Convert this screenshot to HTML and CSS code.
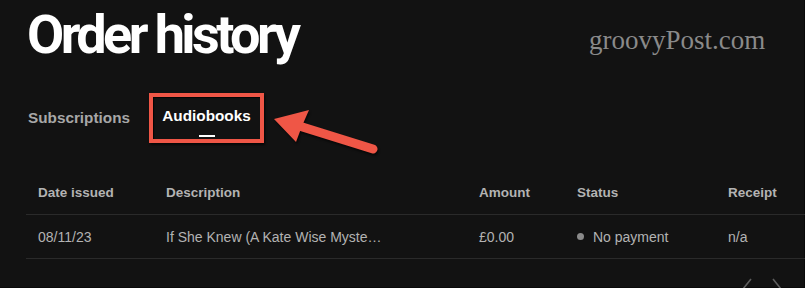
FILE: index.html
```html
<!DOCTYPE html>
<html lang="en">
<head>
<meta charset="utf-8">
<title>Order history</title>
<link rel="stylesheet" href="styles.css">
</head>
<body>
<div class="page">
  <h1 class="title">Order history</h1>
  <div class="watermark">groovyPost.com</div>

  <nav class="tabs">
    <span class="tab">Subscriptions</span>
    <span class="tab tab-active">
      <span class="tab-label">Audiobooks</span>
      <span class="tab-bar"></span>
    </span>
  </nav>

  <svg class="arrow" width="120" height="50" viewBox="0 0 120 50" aria-hidden="true">
    <line x1="103" y1="44" x2="26" y2="20" stroke="#ef5646" stroke-width="9" stroke-linecap="round"/>
    <polygon points="4,14 39,5 32,21 26,37" fill="#ef5646"/>
  </svg>

  <div class="table">
    <div class="row head">
      <div class="cell">Date issued</div>
      <div class="cell">Description</div>
      <div class="cell">Amount</div>
      <div class="cell">Status</div>
      <div class="cell">Receipt</div>
    </div>
    <div class="row body-row">
      <div class="cell">08/11/23</div>
      <div class="cell">If She Knew (A Kate Wise Myste…</div>
      <div class="cell">£0.00</div>
      <div class="cell status"><span class="dot"></span>No payment</div>
      <div class="cell">n/a</div>
    </div>
  </div>

  <div class="pager">
    <svg class="chev" width="14" height="22" viewBox="0 0 14 22" aria-hidden="true"><path d="M11 1 L3 11 L11 21" fill="none" stroke="#5e5e5e" stroke-width="1.6"/></svg>
    <svg class="chev" width="14" height="22" viewBox="0 0 14 22" aria-hidden="true"><path d="M3 1 L11 11 L3 21" fill="none" stroke="#5e5e5e" stroke-width="1.6"/></svg>
  </div>
</div>
</body>
</html>
```

FILE: styles.css
```css
* { box-sizing: border-box; }

html, body {
  margin: 0;
  padding: 0;
  background: #121212;
}

.page {
  position: relative;
  width: 805px;
  height: 288px;
  overflow: hidden;
  background: #121212;
  box-shadow: inset -1px -1px 0 #0a0a0a;
  font-family: "Liberation Sans", Arial, sans-serif;
  color: #b3b3b3;
}

.title {
  margin: 0;
  padding: 8px 0 0 27px;
  font-family: Roboto, "Liberation Sans", sans-serif;
  font-weight: 700;
  font-size: 54px;
  line-height: 54px;
  letter-spacing: -3.6px;
  color: #ffffff;
}

.watermark {
  position: absolute;
  left: 589px;
  top: 25px;
  font-family: "Liberation Serif", "Times New Roman", serif;
  font-size: 27px;
  line-height: 30px;
  color: #8a8a8a;
}

.tabs {
  display: flex;
  align-items: center;
  gap: 19px;
  margin: 31px 0 0 28px;
}

.tab {
  font-size: 15.3px;
  font-weight: 700;
  line-height: 18px;
  color: #a7a7a7;
}

.tab-active {
  display: flex;
  flex-direction: column;
  align-items: center;
  width: 115px;
  height: 50px;
  padding: 10px 0 0 0;
  border: 4px solid #ef5646;
  color: #ffffff;
  box-shadow: 1px 2px 2px rgba(0, 0, 0, 0.7), inset 1px 1px 1px rgba(0, 0, 0, 0.8);
}

.tab-bar {
  display: block;
  width: 16px;
  height: 2px;
  margin-top: 10px;
  background: #ffffff;
}

.arrow {
  position: absolute;
  left: 270px;
  top: 105px;
  filter: drop-shadow(1px 2px 1px rgba(0, 0, 0, 0.6));
}

.table {
  margin: 27px 0 0 26px;
}

.row {
  display: grid;
  grid-template-columns: 128px 313px 98px 151px 1fr;
  align-items: center;
  border-bottom: 1px solid #2a2a2a;
}

.head {
  height: 45px;
  font-size: 13.5px;
  font-weight: 700;
  color: #b3b3b3;
}

.body-row {
  height: 44px;
  font-size: 14px;
  color: #b3b3b3;
}

.cell {
  padding-left: 12px;
  white-space: nowrap;
}

.status {
  display: flex;
  align-items: center;
  gap: 9px;
}

.dot {
  width: 7px;
  height: 7px;
  border-radius: 50%;
  background: #8a8a8a;
}

.pager {
  display: flex;
  justify-content: flex-end;
  gap: 16px;
  margin-top: 19px;
  padding-right: 21px;
}

.chev { display: block; }
```
